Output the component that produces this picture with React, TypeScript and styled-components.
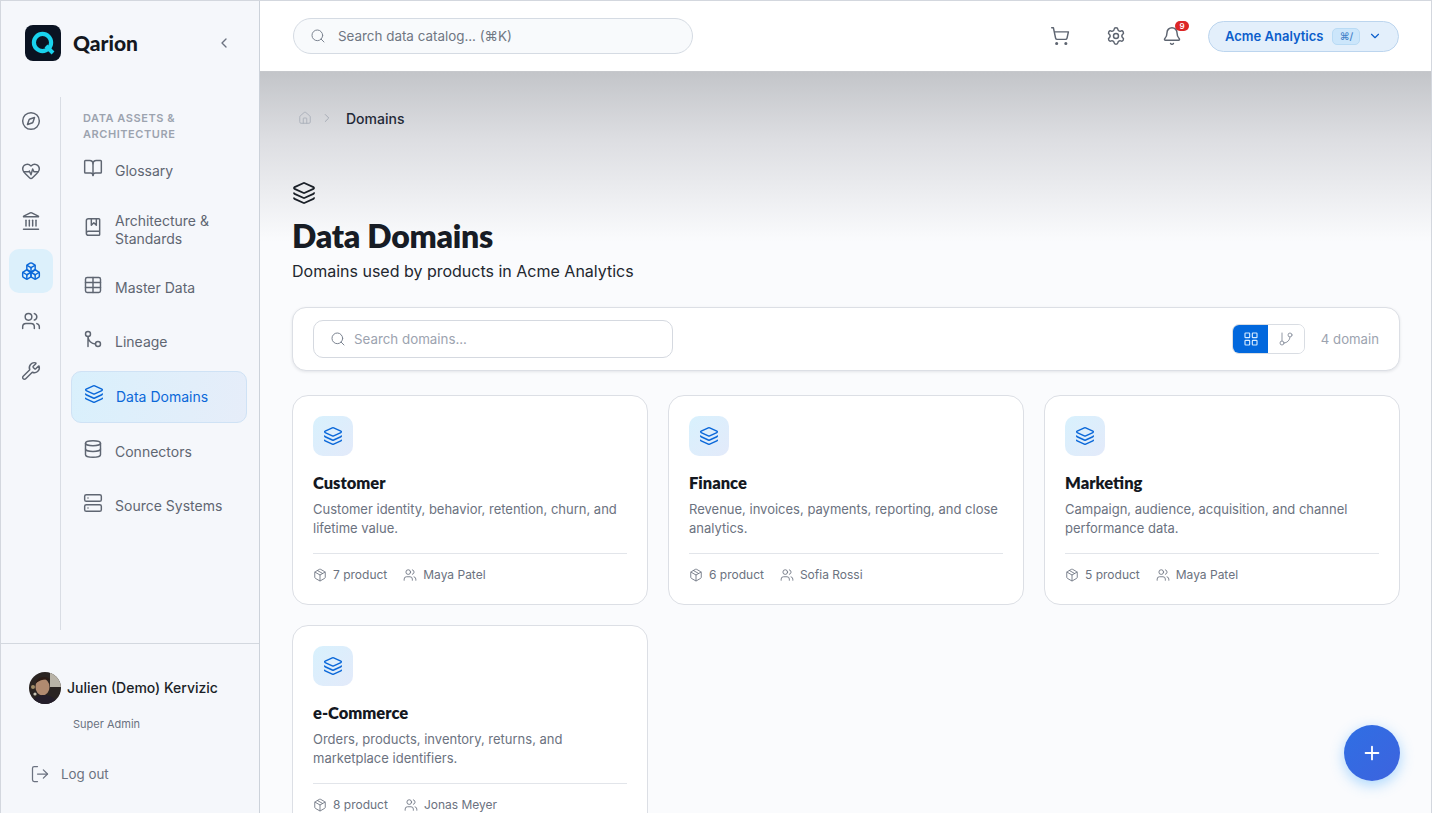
import React from "react";
import styled, { createGlobalStyle } from "styled-components";
import {
  Compass, HeartPulse, Landmark, Boxes, Users, Wrench, BookOpen, BookMarked, Table, GitMerge, Layers,
  Database, Server, LogOut, ShoppingCart, Settings, Bell, ChevronDown, ChevronLeft, ChevronRight, Home,
  Search, LayoutGrid, GitBranch, Package, Plus,
} from "lucide-react";

const Global = createGlobalStyle`
  html, body { margin: 0; padding: 0; height: 100%; overflow: hidden; }
  body { font-family: Inter, "Liberation Sans", sans-serif; color: #111827; }
  * { box-sizing: border-box; }
`;

const Shell = styled.div`
  height: 813px; width: 1432px; display: flex; overflow: hidden; position: relative;
  border: 1px solid #d3d7de; border-bottom: 0; background: #fafbfd;
`;
const Side = styled.aside`
  width: 259px; flex: none; display: flex; flex-direction: column; background: #f5f7fb;
  border-right: 1px solid #ccd2da;
`;
const Brand = styled.div`
  height: 96px; flex: none; display: flex; align-items: flex-start; padding: 24px 27px 0 24px; gap: 12px;
`;
const BrandName = styled.span`
  font-family: Lato, sans-serif; font-weight: 900; font-size: 21px; line-height: 36px; color: #14181f; flex: 1;
`;
const Collapse = styled.span`
  display: flex; align-items: center; height: 36px; color: #6b7280;
`;
const SideBody = styled.div`
  flex: 1; display: flex; min-height: 0;
`;
const Rail = styled.nav`
  width: 60px; height: 533px; flex: none; border-right: 1px solid #d9dde4; display: flex; flex-direction: column;
  align-items: center; padding-top: 2px; gap: 6px;
`;
const RailBtn = styled.div<{ $on?: boolean }>`
  width: 44px; height: 44px; flex: none; border-radius: 10px; display: flex; align-items: center; justify-content: center;
  color: ${p => (p.$on ? "#0b68d9" : "#5d6470")};
  background: ${p => (p.$on ? "#dcf0fb" : "transparent")};
`;
const Sub = styled.nav`
  flex: 1; padding: 13px 12px 0 10px; display: flex; flex-direction: column;
`;
const SubTitle = styled.div`
  font-size: 11px; line-height: 16px; font-weight: 600; letter-spacing: .55px; text-transform: uppercase; color: #9ca3af;
  padding-left: 12px; margin-bottom: 3px;
`;
const Item = styled.div<{ $on?: boolean; $tall?: boolean }>`
  display: flex; align-items: center; gap: 12px; flex: none;
  height: ${p => (p.$tall ? "60px" : "52.6px")};
  margin-bottom: 2px; border-radius: 10px; font-size: 14px; line-height: 18px;
  padding: 0 12px 0 ${p => (p.$on ? "12px" : "11px")};
  color: ${p => (p.$on ? "#0b68d9" : "#5f6672")};
  border: 1px solid ${p => (p.$on ? "#cfe2f5" : "transparent")};
  background: ${p => (p.$on ? "linear-gradient(100deg,#d9f0fc,#e6edf9)" : "transparent")};
  & > svg { flex: none; margin-top: -6px; }
`;
const Foot = styled.div`
  height: 170px; flex: none; border-top: 1px solid #d3d8df; padding: 28px 28px 0;
`;
const UserRow = styled.div`
  display: flex; align-items: center; gap: 6px; font-size: 14px; font-weight: 500; color: #1b1f27; line-height: 32px;
`;
const Role = styled.div`
  font-size: 11px; color: #6b7280; margin: 12px 0 0 44px; line-height: 16px;
`;
const Logout = styled.div`
  display: flex; align-items: center; gap: 11px; margin: 32px 0 0 1px; color: #6b7280; font-size: 13.33px; line-height: 20px;
`;
const Right = styled.div`
  flex: 1; min-width: 0; display: flex; flex-direction: column;
`;
const Top = styled.header`
  height: 71px; flex: none; background: #fff; display: flex; align-items: center; padding: 0 32px 0 33px;
  border-bottom: 1px solid #c6c8cc;
`;
const GlobalSearch = styled.div`
  width: 400px; height: 36px; border-radius: 18px; border: 1px solid #d5dbe3; background: #f8fafc;
  display: flex; align-items: center; gap: 12px; padding: 0 16px; font-size: 13.4px; color: #6f7682;
`;
const TopIcons = styled.div`
  margin-left: auto; display: flex; align-items: center; gap: 36px; color: #5d6470; margin-right: 26px;
`;
const BellWrap = styled.div`
  position: relative; display: flex;
`;
const Badge = styled.span`
  position: absolute; top: -5px; right: -7px; width: 14px; height: 10px; border-radius: 6px; background: #dc2626; color: #fff;
  font-size: 8px; font-weight: 600; line-height: 10px; text-align: center;
`;
const OrgPill = styled.div`
  width: 191px; height: 31px; border-radius: 16px; background: #e3effb; border: 1px solid #bcd5ee; display: flex; align-items: center;
  padding-left: 16px; color: #0b5ecb; font-size: 13px; font-weight: 600; gap: 8px;
`;
const Kbd = styled.span`
  width: 28px; height: 17px; margin-left: 1px; border-radius: 5px; background: #cce6fb; border: 1px solid #b9dbf5; font-size: 10px; font-weight: 500; color: #3f80c8;
  display: flex; align-items: center; justify-content: center;
`;
const PillChevron = styled.span`
  display: flex;
`;
const Main = styled.main`
  flex: 1; min-height: 0; overflow: hidden; padding: 36px 31px 0 32px;
  background: linear-gradient(180deg, #c3c5c9 0, #dcdde1 65px, #fafbfd 170px, #fafbfd 100%);
`;
const Crumbs = styled.div`
  display: flex; align-items: center; height: 20px; font-size: 14px; font-weight: 500; color: #1f2937;
  & > svg { color: #a0a6b0; }
`;
const CrumbHome = styled.span`
  display: flex; margin: 0 8px 0 6px; color: #a8aeb8;
`;
const CrumbLabel = styled.span`
  margin-left: 12px;
`;
const PageIcon = styled.div`
  margin-top: 53px; height: 24px; color: #1a1f27; display: flex;
`;
const Title = styled.h1`
  margin: 12px 0 0; font-family: Lato, sans-serif; font-weight: 800; font-size: 32px; line-height: 38px; color: #171c25; letter-spacing: -.25px;
`;
const Subtitle = styled.p`
  margin: 4px 0 0; font-size: 16px; line-height: 24px; color: #22272f;
`;
const Toolbar = styled.div`
  margin-top: 24px; height: 64px; background: #fff; border: 1px solid #dcdfe5; border-radius: 14px; box-shadow: 0 1px 3px rgba(20,30,50,.1);
  display: flex; align-items: center; padding: 0 20px;
`;
const DomainSearch = styled.div`
  width: 360px; height: 38px; border: 1px solid #d5d9e0; border-radius: 10px; display: flex; align-items: center; gap: 8px;
  padding: 0 16px; color: #9ca3af; font-size: 13.33px;
  & > svg { color: #7c8491; }
`;
const Toggle = styled.div`
  margin-left: auto; width: 73px; height: 30px; border: 1px solid #d9dde3; border-radius: 7px; display: flex; overflow: hidden;
`;
const ToggleBtn = styled.div<{ $on?: boolean }>`
  flex: 1; display: flex; align-items: center; justify-content: center;
  background: ${p => (p.$on ? "#0268dd" : "#fff")}; color: ${p => (p.$on ? "#d6ebff" : "#9299a5")};
`;
const Count = styled.span`
  margin-left: 16px; font-size: 13.2px; color: #9ca3af;
`;
const Grid = styled.div`
  margin-top: 24px; display: grid; grid-template-columns: repeat(3, 356px); gap: 20px;
`;
const Card = styled.article`
  height: 210px; background: #fff; border: 1px solid #dcdfe5; border-radius: 16px; padding: 20px;
  display: flex; flex-direction: column;
`;
const Tile = styled.div`
  width: 40px; height: 40px; border-radius: 10px; background: linear-gradient(135deg,#d8f1fd,#e3eafa); color: #0b68d9;
  display: flex; align-items: center; justify-content: center;
`;
const CardTitle = styled.h3`
  margin: 15px 0 0; font-family: Lato, sans-serif; font-weight: 800; font-size: 16.5px; line-height: 24px; color: #14181f;
`;
const CardDesc = styled.p`
  margin: 4.5px 0 0; font-size: 13px; line-height: 19.5px; color: #6b7280; height: 39px;
`;
const CardMeta = styled.div`
  margin-top: 14.5px; border-top: 1px solid #e2e5ea; padding-top: 12px; display: flex; align-items: center; gap: 16px; font-size: 12px; line-height: 18px; color: #6b7280;
`;
const MetaItem = styled.span`
  display: flex; align-items: center; gap: 6px;
`;
const Fab = styled.button`
  position: absolute; right: 31px; bottom: 32px; width: 56px; height: 56px; border-radius: 50%; border: 0; padding: 0;
  background: linear-gradient(135deg,#2f6fe4,#3d63de); color: #fff; box-shadow: 0 4px 14px rgba(70,170,255,.45);
  display: flex; align-items: center; justify-content: center;
`;

const Logo = () => (
  <svg width="36" height="36" viewBox="0 0 36 36" style={{ flex: "none" }}>
    <rect width="36" height="36" rx="8" fill="#0a1322" />
    <circle cx="17.5" cy="17.5" r="8.6" fill="none" stroke="#19d3ee" strokeWidth="4.2" />
    <path d="M21 21l7 7" stroke="#19d3ee" strokeWidth="4" />
  </svg>
);
const Avatar = () => (
  <svg width="32" height="32" viewBox="0 0 32 32" style={{ flex: "none" }}>
    <defs><clipPath id="av"><circle cx="16" cy="16" r="16" /></clipPath></defs>
    <g clipPath="url(#av)">
      <rect width="32" height="32" fill="#2a2422" />
      <rect x="21" y="1" width="11" height="14" fill="#b9b4a8" />
      <circle cx="4" cy="15" r="2" fill="#a08c66" />
      <circle cx="6" cy="22" r="1.6" fill="#c8c3b4" />
      <ellipse cx="13.5" cy="15" rx="7" ry="8.5" fill="#b08a70" />
      <path d="M7 11c0-7 12-8 14-3-4-1-9-1-14 3z" fill="#2c1c16" />
      <path d="M3 32c1-7 8-9 12-9s12 2 13 9z" fill="#241e2a" />
    </g>
  </svg>
);

const cards = [
  { t: "Customer", d: "Customer identity, behavior, retention, churn, and lifetime value.", n: 7, o: "Maya Patel" },
  { t: "Finance", d: "Revenue, invoices, payments, reporting, and close analytics.", n: 6, o: "Sofia Rossi" },
  { t: "Marketing", d: "Campaign, audience, acquisition, and channel performance data.", n: 5, o: "Maya Patel" },
  { t: "e-Commerce", d: "Orders, products, inventory, returns, and marketplace identifiers.", n: 8, o: "Jonas Meyer" },
];

export default function App() {
  return (
    <Shell>
      <Global />
      <Side>
        <Brand>
          <Logo />
          <BrandName>Qarion</BrandName>
          <Collapse><ChevronLeft size={16} /></Collapse>
        </Brand>
        <SideBody>
          <Rail>
            <RailBtn><Compass size={20} strokeWidth={1.75} /></RailBtn>
            <RailBtn><HeartPulse size={20} strokeWidth={1.75} /></RailBtn>
            <RailBtn><Landmark size={20} strokeWidth={1.75} /></RailBtn>
            <RailBtn $on><Boxes size={20} strokeWidth={1.75} /></RailBtn>
            <RailBtn><Users size={20} strokeWidth={1.75} /></RailBtn>
            <RailBtn><Wrench size={20} strokeWidth={1.75} /></RailBtn>
          </Rail>
          <Sub>
            <SubTitle>Data Assets &amp;<br />Architecture</SubTitle>
            <Item><BookOpen size={20} strokeWidth={1.75} />Glossary</Item>
            <Item $tall><BookMarked size={20} strokeWidth={1.75} /><span>Architecture &amp;<br />Standards</span></Item>
            <Item><Table size={20} strokeWidth={1.75} />Master Data</Item>
            <Item><GitMerge size={20} strokeWidth={1.75} />Lineage</Item>
            <Item $on><Layers size={20} strokeWidth={1.75} />Data Domains</Item>
            <Item><Database size={20} strokeWidth={1.75} />Connectors</Item>
            <Item><Server size={20} strokeWidth={1.75} />Source Systems</Item>
          </Sub>
        </SideBody>
        <Foot>
          <UserRow><Avatar />Julien (Demo) Kervizic</UserRow>
          <Role>Super Admin</Role>
          <Logout><LogOut size={20} strokeWidth={1.5} />Log out</Logout>
        </Foot>
      </Side>
      <Right>
        <Top>
          <GlobalSearch><Search size={16} strokeWidth={1.5} color="#7c8491" />Search data catalog... (⌘K)</GlobalSearch>
          <TopIcons>
            <ShoppingCart size={20} strokeWidth={1.75} />
            <Settings size={20} strokeWidth={1.75} />
            <BellWrap><Bell size={20} strokeWidth={1.75} /><Badge>9</Badge></BellWrap>
          </TopIcons>
          <OrgPill>
            Acme Analytics
            <Kbd>⌘/</Kbd>
            <PillChevron><ChevronDown size={14} strokeWidth={2} /></PillChevron>
          </OrgPill>
        </Top>
        <Main>
          <Crumbs>
            <CrumbHome><Home size={14} strokeWidth={1.5} /></CrumbHome>
            <ChevronRight size={14} strokeWidth={1.5} />
            <CrumbLabel>Domains</CrumbLabel>
          </Crumbs>
          <PageIcon><Layers size={24} strokeWidth={1.75} /></PageIcon>
          <Title>Data Domains</Title>
          <Subtitle>Domains used by products in Acme Analytics</Subtitle>
          <Toolbar>
            <DomainSearch><Search size={16} strokeWidth={1.5} />Search domains...</DomainSearch>
            <Toggle>
              <ToggleBtn $on><LayoutGrid size={16} strokeWidth={1.75} /></ToggleBtn>
              <ToggleBtn><GitBranch size={16} strokeWidth={1.5} /></ToggleBtn>
            </Toggle>
            <Count>4 domain</Count>
          </Toolbar>
          <Grid>
            {cards.map(c => (
              <Card key={c.t}>
                <Tile><Layers size={20} strokeWidth={1.75} /></Tile>
                <CardTitle>{c.t}</CardTitle>
                <CardDesc>{c.d}</CardDesc>
                <CardMeta>
                  <MetaItem><Package size={14} strokeWidth={1.5} />{c.n} product</MetaItem>
                  <MetaItem><Users size={14} strokeWidth={1.5} />{c.o}</MetaItem>
                </CardMeta>
              </Card>
            ))}
          </Grid>
        </Main>
      </Right>
      <Fab aria-label="Add"><Plus size={22} strokeWidth={2} /></Fab>
    </Shell>
  );
}
